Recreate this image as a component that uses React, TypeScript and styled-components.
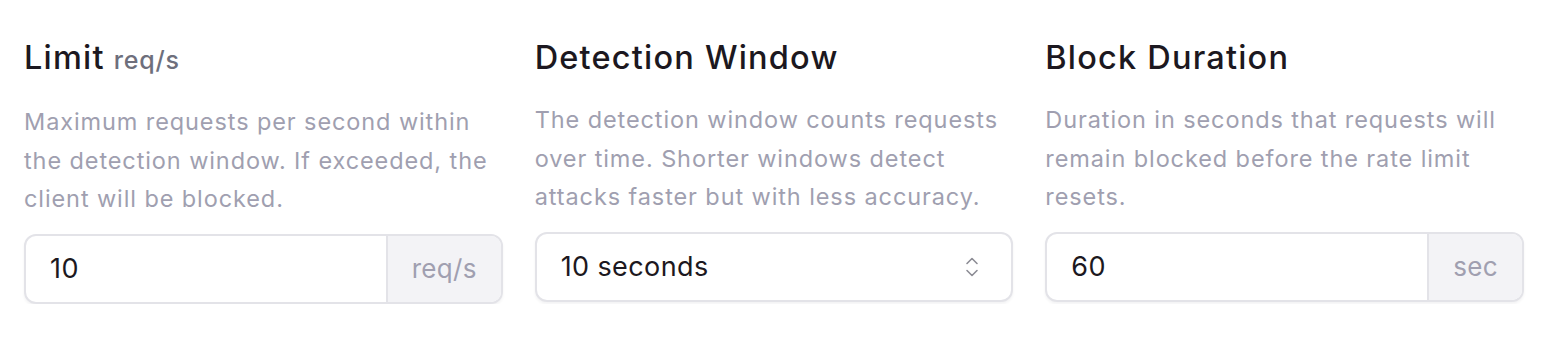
import React from "react";
import styled, { createGlobalStyle } from "styled-components";

const GlobalStyle = createGlobalStyle`
  html, body {
    margin: 0;
    padding: 0;
    background: #ffffff;
  }
  body {
    font-family: Inter, "Noto Sans", "Liberation Sans", sans-serif;
    -webkit-font-smoothing: antialiased;
  }
`;

interface FieldProps {
  title: string;
  unit?: string;
  description: string;
  children: React.ReactNode;
}

const Field: React.FC<FieldProps> = ({ title, unit, description, children }) => {
  return (
    <Column>
      <Title>
        {title}
        {unit && <TitleUnit>{unit}</TitleUnit>}
      </Title>
      <Description>{description}</Description>
      {children}
    </Column>
  );
};

const ChevronsUpDown = () => (
  <svg width="14" height="22" viewBox="0 0 14 22" fill="none">
    <path
      d="M2 7.5 7 2.5 12 7.5"
      stroke="#8d8d95"
      strokeWidth="1.6"
      strokeLinecap="round"
      strokeLinejoin="round"
    />
    <path
      d="M2 14.5 7 19.5 12 14.5"
      stroke="#8d8d95"
      strokeWidth="1.6"
      strokeLinecap="round"
      strokeLinejoin="round"
    />
  </svg>
);

export default function App() {
  return (
    <>
      <GlobalStyle />
      <Wrapper>
        <Field
          title="Limit"
          unit="req/s"
          description="Maximum requests per second within the detection window. If exceeded, the client will be blocked."
        >
          <InputGroup>
            <Value>10</Value>
            <Addon>req/s</Addon>
          </InputGroup>
        </Field>
        <Field
          title="Detection Window"
          description="The detection window counts requests over time. Shorter windows detect attacks faster but with less accuracy."
        >
          <SelectBox>
            <Value>10 seconds</Value>
            <ChevronSlot>
              <ChevronsUpDown />
            </ChevronSlot>
          </SelectBox>
        </Field>
        <Field
          title="Block Duration"
          description="Duration in seconds that requests will remain blocked before the rate limit resets."
        >
          <InputGroup>
            <Value>60</Value>
            <Addon>sec</Addon>
          </InputGroup>
        </Field>
      </Wrapper>
    </>
  );
}

const Wrapper = styled.section`
  display: grid;
  grid-template-columns: repeat(3, 1fr);
  gap: 32px;
  padding: 38px 24px 0;
`;

const Column = styled.div`
  display: flex;
  flex-direction: column;
  min-width: 0;
`;

const Title = styled.h3`
  margin: 0;
  font-size: 32.5px;
  line-height: 40px;
  font-weight: 500;
  color: #1c1820;
  letter-spacing: 1.2px;
`;

const TitleUnit = styled.span`
  margin-left: 9px;
  font-size: 25px;
  font-weight: 500;
  letter-spacing: 0.8px;
  color: #6e6f7c;
`;

const Description = styled.p`
  margin: 23px 0 15px;
  font-size: 23.5px;
  line-height: 38.5px;
  letter-spacing: 0.9px;
  color: #a09fb0;
`;

const BoxBase = styled.div`
  display: flex;
  align-items: stretch;
  height: 70px;
  box-sizing: border-box;
  border: 2px solid #e3e3e8;
  border-radius: 12px;
  background: #ffffff;
  box-shadow: 0 2px 3px rgba(20, 20, 40, 0.05);
  overflow: hidden;
`;

const InputGroup = styled(BoxBase)``;

const SelectBox = styled(BoxBase)`
  cursor: pointer;
`;

const Value = styled.div`
  flex: 1;
  display: flex;
  align-items: center;
  padding: 0 24px;
  font-size: 27px;
  letter-spacing: 0.4px;
  color: #1c1820;
`;

const Addon = styled.div`
  display: flex;
  align-items: center;
  justify-content: center;
  padding: 0 24px;
  border-left: 2px solid #e3e3e8;
  background: #f3f3f6;
  font-size: 26px;
  letter-spacing: 0.3px;
  color: #a09fb0;
`;

const ChevronSlot = styled.div`
  display: flex;
  align-items: center;
  padding-right: 32px;
`;
